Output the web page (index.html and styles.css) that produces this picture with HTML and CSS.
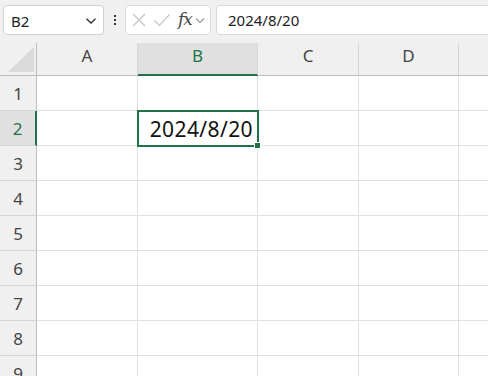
FILE: index.html
```html
<!DOCTYPE html>
<html>
<head>
<meta charset="utf-8">
<link rel="stylesheet" href="styles.css">
</head>
<body>
<div class="toolbar">
  <div class="namebox">
    <span class="name">B2</span>
    <svg class="chev" width="12" height="8" viewBox="0 0 12 8"><path d="M1.5 1.8 L6 6 L10.5 1.8" fill="none" stroke="#333" stroke-width="1.4"/></svg>
  </div>
  <div class="dots"><span></span><span></span><span></span></div>
  <div class="fbox">
    <svg width="16" height="16" viewBox="0 0 16 16"><path d="M2 2 L14 14 M14 2 L2 14" stroke="#c4c4c4" stroke-width="1.2" fill="none"/></svg>
    <svg width="18" height="16" viewBox="0 0 18 16"><path d="M1.5 8.5 L6.5 13.5 L16.5 2.5" stroke="#c4c4c4" stroke-width="1.2" fill="none"/></svg>
    <span class="fx">fx</span>
    <svg class="chev2" width="10" height="7" viewBox="0 0 10 7"><path d="M1 1.5 L5 5.5 L9 1.5" fill="none" stroke="#999" stroke-width="1.1"/></svg>
  </div>
  <div class="finput">2024/8/20</div>
</div>
<div class="sheet">
  <div class="corner"><div class="tri"></div></div>
  <div class="ch">A</div>
  <div class="ch active">B</div>
  <div class="ch">C</div>
  <div class="ch">D</div>
  <div class="ch last"></div>

  <div class="rh">1</div><div class="c"></div><div class="c"></div><div class="c"></div><div class="c"></div><div class="c last"></div>
  <div class="rh active">2</div><div class="c"></div><div class="c sel"><span class="val">2024/8/20</span><div class="selbox"><div class="handle"></div></div></div><div class="c"></div><div class="c"></div><div class="c last"></div>
  <div class="rh">3</div><div class="c"></div><div class="c"></div><div class="c"></div><div class="c"></div><div class="c last"></div>
  <div class="rh">4</div><div class="c"></div><div class="c"></div><div class="c"></div><div class="c"></div><div class="c last"></div>
  <div class="rh">5</div><div class="c"></div><div class="c"></div><div class="c"></div><div class="c"></div><div class="c last"></div>
  <div class="rh">6</div><div class="c"></div><div class="c"></div><div class="c"></div><div class="c"></div><div class="c last"></div>
  <div class="rh">7</div><div class="c"></div><div class="c"></div><div class="c"></div><div class="c"></div><div class="c last"></div>
  <div class="rh">8</div><div class="c"></div><div class="c"></div><div class="c"></div><div class="c"></div><div class="c last"></div>
  <div class="rh">9</div><div class="c"></div><div class="c"></div><div class="c"></div><div class="c"></div><div class="c last"></div>
</div>
</body>
</html>
```

FILE: styles.css
```css
html, body {
  margin: 0;
  padding: 0;
  background: #f0f0f0;
  width: 488px;
  height: 376px;
  overflow: hidden;
  font-family: "Noto Sans", "Liberation Sans", sans-serif;
}

.toolbar {
  height: 43px;
  display: flex;
  align-items: flex-start;
  padding: 5px 0 0 3px;
  box-sizing: border-box;
  width: 520px;
}

.namebox {
  width: 101px;
  height: 30px;
  box-sizing: border-box;
  background: #fff;
  border: 1px solid #d1d1d1;
  border-radius: 4px;
  display: flex;
  align-items: center;
  padding: 0 6px 0 7px;
}
.name {
  flex: 1;
  font-size: 15px;
  color: #222;
  padding-top: 2px;
}
.chev { margin-top: 1px; }

.dots {
  width: 21px;
  height: 30px;
  display: flex;
  flex-direction: column;
  align-items: center;
  justify-content: center;
  gap: 2px;
}
.dots span {
  width: 2px;
  height: 2px;
  background: #333;
}

.fbox {
  width: 86px;
  height: 30px;
  box-sizing: border-box;
  background: #fff;
  border: 1px solid #d9d9d9;
  border-radius: 4px;
  display: flex;
  align-items: center;
  padding-left: 5px;
}
.fbox svg:first-child { margin-right: 6px; }
.fx {
  font-family: "DejaVu Serif", "Liberation Serif", serif;
  font-style: italic;
  font-size: 17px;
  color: #444;
  margin-left: 7px;
  letter-spacing: -1px;
  padding-bottom: 2px;
}
.chev2 { margin-left: 3px; }

.finput {
  flex: 1;
  margin-left: 5px;
  height: 30px;
  box-sizing: border-box;
  background: #fff;
  border: 1px solid #d9d9d9;
  border-radius: 4px;
  padding: 4px 0 0 11px;
  font-size: 15px;
  color: #222;
}

.sheet {
  display: grid;
  grid-template-columns: 37px 101px 120px 101px 100px 40px;
  grid-template-rows: 33px repeat(9, 35px);
  background: #fff;
}

.corner {
  background: #f0f0f0;
  border-right: 1px solid #bdbdbd;
  border-bottom: 1px solid #bdbdbd;
  position: relative;
}
.tri {
  position: absolute;
  left: 8px;
  top: 4px;
  width: 26px;
  height: 25px;
  background: #dadada;
  clip-path: polygon(100% 0, 100% 100%, 0 100%);
}

.ch {
  background: #f0f0f0;
  border-right: 1px solid #d6d6d6;
  border-bottom: 1px solid #bdbdbd;
  display: flex;
  align-items: center;
  justify-content: center;
  font-size: 17px;
  color: #444;
  padding-bottom: 7px;
}
.ch.active {
  background: #e0e0e0;
  border-bottom: 2px solid #217346;
  color: #217346;
  padding-bottom: 6px;
}
.ch.last { border-right: none; }

.rh {
  background: #f0f0f0;
  border-right: 1px solid #bdbdbd;
  border-bottom: 1px solid #d6d6d6;
  display: flex;
  align-items: center;
  justify-content: center;
  font-size: 17px;
  color: #444;
}
.rh.active {
  background: #e0e0e0;
  border-right: 2px solid #217346;
  color: #217346;
}

.c {
  border-right: 1px solid #e0e0e0;
  border-bottom: 1px solid #e0e0e0;
}
.c.last { border-right: none; }

.sel {
  position: relative;
  display: flex;
  align-items: center;
  justify-content: flex-end;
}
.val {
  font-size: 21px;
  letter-spacing: 0.4px;
  color: #111;
  padding-right: 4px;
  padding-top: 1px;
}
.selbox {
  position: absolute;
  left: -1px;
  top: -1px;
  right: -2px;
  bottom: -2px;
  border: 2px solid #217346;
}
.handle {
  position: absolute;
  right: -4px;
  bottom: -4px;
  width: 5px;
  height: 5px;
  background: #217346;
  border: 1px solid #fff;
}
```
